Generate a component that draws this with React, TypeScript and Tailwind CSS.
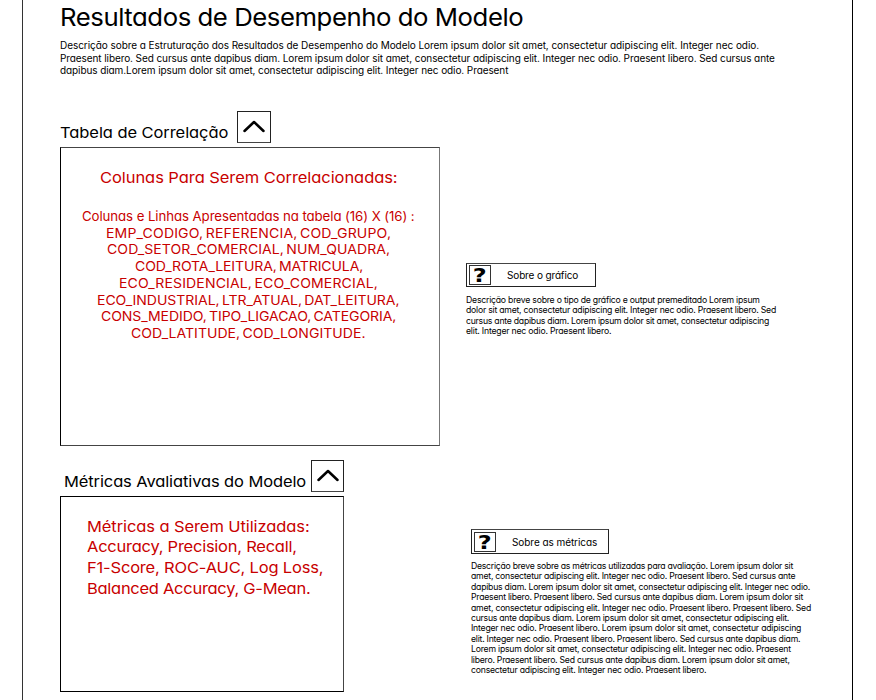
import { useLayoutEffect, useRef, useState } from "react";
import clsx from "clsx";

type LineProps = { text: string; width: number; stretch?: number; className?: string };

/* One line of copy, widened and tracked so that it fills the given measure. */
function Line({ text, width, stretch = 1, className }: LineProps) {
  const ref = useRef<HTMLSpanElement>(null);
  const [tracking, setTracking] = useState(0);
  useLayoutEffect(() => {
    const el = ref.current;
    if (!el) return;
    el.style.letterSpacing = "0px";
    const natural = el.offsetWidth;
    const value = (width / stretch - natural) / (text.length - 1);
    setTracking(value);
    el.style.letterSpacing = `${value}px`;
  }, [text, width, stretch]);
  return (
    <div className={clsx("whitespace-pre", className)} style={{ width: `${width}px` }}>
      <span
        ref={ref}
        className="inline-block origin-left"
        style={{ letterSpacing: `${tracking}px`, transform: stretch === 1 ? undefined : `scaleX(${stretch})` }}
      >
        {text}
      </span>
    </div>
  );
}

function CollapseButton({ className }: { className: string }) {
  return (
    <button className={clsx("flex shrink-0 items-center justify-center border border-[#222] border-b-[#444]", className)}>
      <svg width="22" height="14" viewBox="0 0 22 14" fill="none" stroke="#000" strokeWidth="2.5" strokeLinecap="round" strokeLinejoin="round">
        <path d="M1.5 11 11 2 20.5 11" />
      </svg>
    </button>
  );
}

function HelpButton({ label, width, className }: { label: string; width: number; className: string }) {
  return (
    <button className={clsx("flex items-center border border-[#222] border-t-[#444]", className)}>
      <span className="flex h-5 w-[22px] items-center justify-center border border-[#333] font-['DejaVu_Sans'] text-[20px] leading-none font-bold">
        <span className="inline-block scale-x-[1.2]">?</span>
      </span>
      <Line text={label} width={width} className="ml-4 text-left text-[10px] leading-[14px]" />
    </button>
  );
}

const intro: [string, number][] = [
  ["Descrição sobre a Estruturação dos Resultados de Desempenho do Modelo Lorem ipsum dolor sit amet, consectetur adipiscing elit. Integer nec odio.", 699],
  ["Praesent libero. Sed cursus ante dapibus diam. Lorem ipsum dolor sit amet, consectetur adipiscing elit. Integer nec odio. Praesent libero. Sed cursus ante", 714.5],
  ["dapibus diam.Lorem ipsum dolor sit amet, consectetur adipiscing elit. Integer nec odio. Praesent", 448.5],
];

const columns: [string, number][] = [
  ["EMP_CODIGO, REFERENCIA, COD_GRUPO,", 285],
  ["COD_SETOR_COMERCIAL, NUM_QUADRA,", 283],
  ["COD_ROTA_LEITURA, MATRICULA,", 228],
  ["ECO_RESIDENCIAL, ECO_COMERCIAL,", 259],
  ["ECO_INDUSTRIAL, LTR_ATUAL, DAT_LEITURA,", 303],
  ["CONS_MEDIDO, TIPO_LIGACAO, CATEGORIA,", 295],
  ["COD_LATITUDE, COD_LONGITUDE.", 235],
];

const chartNotes: [string, number][] = [
  ["Descrição breve sobre o tipo de gráfico e output premeditado Lorem ipsum", 294],
  ["dolor sit amet, consectetur adipiscing elit. Integer nec odio. Praesent libero. Sed", 310],
  ["cursus ante dapibus diam. Lorem ipsum dolor sit amet, consectetur adipiscing", 303],
  ["elit. Integer nec odio. Praesent libero.", 145],
];

const metrics: [string, number][] = [
  ["Métricas a Serem Utilizadas:", 223],
  ["Accuracy, Precision, Recall,", 210],
  ["F1-Score, ROC-AUC, Log Loss,", 236],
  ["Balanced Accuracy, G-Mean.", 224],
];

const metricNotes: [string, number][] = [
  ["Descrição breve sobre as métricas utilizadas para avaliação. Lorem ipsum dolor sit", 322.5],
  ["amet, consectetur adipiscing elit. Integer nec odio. Praesent libero. Sed cursus ante", 325],
  ["dapibus diam. Lorem ipsum dolor sit amet, consectetur adipiscing elit. Integer nec odio.", 339],
  ["Praesent libero. Praesent libero. Sed cursus ante dapibus diam. Lorem ipsum dolor sit", 332.5],
  ["amet, consectetur adipiscing elit. Integer nec odio. Praesent libero. Praesent libero. Sed", 340.5],
  ["cursus ante dapibus diam. Lorem ipsum dolor sit amet, consectetur adipiscing elit.", 318],
  ["Integer nec odio. Praesent libero. Lorem ipsum dolor sit amet, consectetur adipiscing", 330],
  ["elit. Integer nec odio. Praesent libero. Praesent libero. Sed cursus ante dapibus diam.", 330],
  ["Lorem ipsum dolor sit amet, consectetur adipiscing elit. Integer nec odio. Praesent", 320.5],
  ["libero. Praesent libero. Sed cursus ante dapibus diam. Lorem ipsum dolor sit amet,", 318.5],
  ["consectetur adipiscing elit. Integer nec odio. Praesent libero.", 236],
];

export default function App() {
  return (
    <div className="h-[700px] w-[876px] overflow-hidden bg-white pl-[22px] font-[Inter,sans-serif] text-black [font-feature-settings:'cv11']">
      <main className="h-full w-[831px] border-x border-l-[#333] border-r-black pl-[37px]">
        <h1 className="pt-px">
          <Line text="Resultados de Desempenho do Modelo" width={464} stretch={1.05} className="text-[24.5px] leading-[33px]" />
        </h1>
        <div className="mt-[5px]">
          {intro.map(([t, w]) => (
            <Line key={t} text={t} width={w} className="text-[10px] leading-[12.67px]" />
          ))}
        </div>

        <section className="mt-[34px] flex">
          <div className="w-[406px] shrink-0">
            <div className="flex h-8">
              <div className="w-[177px] pt-3">
                <Line text="Tabela de Correlação" width={168} stretch={1.1} className="text-[15px] leading-5" />
              </div>
              <CollapseButton className="h-8 w-[34px]" />
            </div>
            <div className="mt-1 flex h-[299px] w-[380px] flex-col items-center border border-black border-t-[#444] border-r-[#777] border-b-[#444] pt-5 pr-[3px] text-[#c80000]">
              <Line text="Colunas Para Serem Correlacionadas:" width={298} stretch={1.1} className="text-[15px] leading-5" />
              <div className="mt-5 flex flex-col items-center">
                <Line text="Colunas e Linhas Apresentadas na tabela (16) X (16) :" width={333} stretch={1.02} className="text-[13px] leading-[16.7px]" />
                {columns.map(([t, w]) => (
                  <Line key={t} text={t} width={w} stretch={1.08} className="text-[13px] leading-[16.7px] [word-spacing:-1.5px]" />
                ))}
              </div>
            </div>
          </div>
          <div className="pt-[152px]">
            <HelpButton label="Sobre o gráfico" width={71} className="h-6 w-[130px] pl-[2px]" />
            <div className="mt-[8px]">
              {chartNotes.map(([t, w]) => (
                <Line key={t} text={t} width={w} className="text-[8.7px] leading-[10.35px]" />
              ))}
            </div>
          </div>
        </section>

        <section className="mt-[14px] flex">
          <div className="w-[411px] shrink-0">
            <div className="flex h-8">
              <div className="w-[251px] pt-3 pl-[4px]">
                <Line text="Métricas Avaliativas do Modelo" width={242} stretch={1.1} className="text-[15px] leading-5" />
              </div>
              <CollapseButton className="h-8 w-[33px]" />
            </div>
            <div className="mt-1 h-[196px] w-[284px] border border-black border-r-[#444] pt-[19.5px] pl-[26px] text-[#c80000]">
              {metrics.map(([t, w]) => (
                <Line key={t} text={t} width={w} stretch={1.1} className="text-[15px] leading-[20.8px]" />
              ))}
            </div>
          </div>
          <div className="pt-[69px]">
            <HelpButton label="Sobre as métricas" width={85} className="h-[25px] w-[138px] pl-[2px]" />
            <div className="mt-[7px]">
              {metricNotes.map(([t, w]) => (
                <Line key={t} text={t} width={w} className="text-[8.7px] leading-[10.4px]" />
              ))}
            </div>
          </div>
        </section>
      </main>
    </div>
  );
}
